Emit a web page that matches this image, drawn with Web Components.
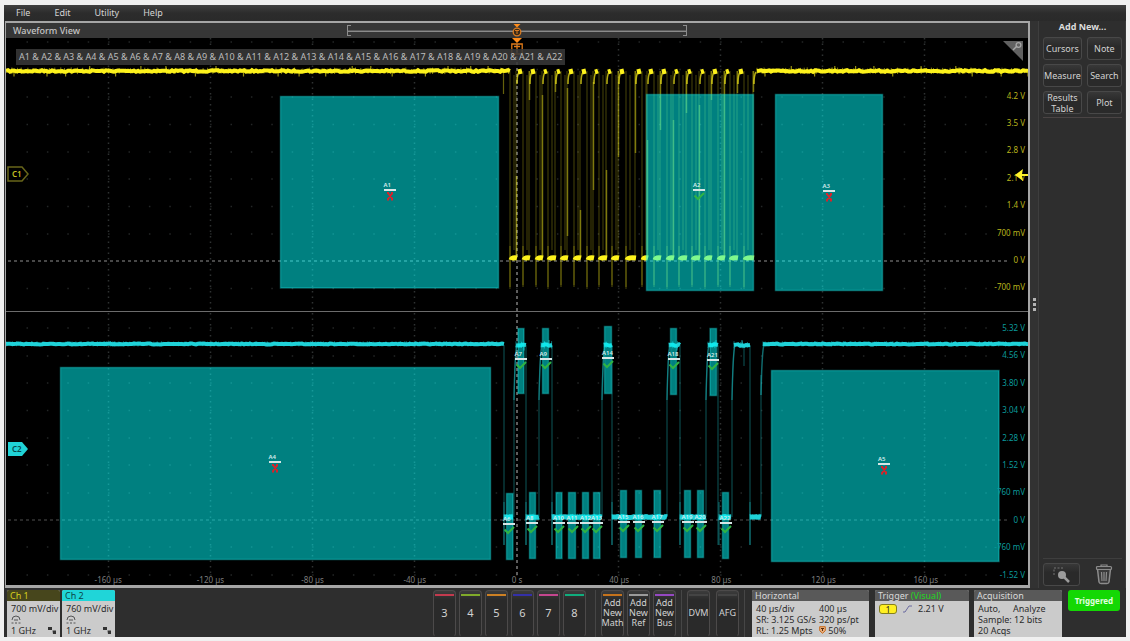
<!DOCTYPE html>
<html lang="en">
<head>
<meta charset="utf-8">
<meta name="viewport" content="width=device-width, initial-scale=1">
<title>Oscilloscope – Waveform View</title>
<style>
html, body { margin: 0; height: 100%; background: #f0f0f0; }
body { font-family: "Noto Sans", "Open Sans", sans-serif; font-size: 9px; line-height: 12px; color: #d2d2d2; }
</style>
</head>
<body>
<scope-app></scope-app>
<script>
const define = (name, html, setup) => {
  const template = document.createElement('template');
  template.innerHTML = html;
  customElements.define(name, class extends HTMLElement {
    constructor() {
      super();
      this.attachShadow({ mode: 'open' }).append(template.content.cloneNode(true));
    }
    connectedCallback() {
      if (setup && !this.ready) { this.ready = true; setup(this, this.shadowRoot); }
    }
  });
};

/* Menu bar */
define('scope-menu', `
<style>
:host { display: block; background: linear-gradient(#404040, #2c2c2c 50%, #2a2a2a); }
nav { display: flex; gap: 24px; padding: 1px 12px; }
button { all: unset; font: inherit; line-height: 14px; color: #d4d4d4; cursor: pointer; }
</style>
<nav><button>File</button><button>Edit</button><button>Utility</button><button>Help</button></nav>`);

/* Region marker: label, bar, pass or fail sign */
define('region-marker', `
<style>
:host { position: absolute; display: flex; flex-direction: column; align-items: center; width: 12px; transform: translate(-50%, -8px); }
span { font-size: 6px; line-height: 7px; font-weight: 600; color: #d4ecec; white-space: nowrap; align-self: flex-start; }
i { width: 12px; height: 2px; background: #d6e6e6; }
svg { width: 12px; height: 10px; display: block; }
path { fill: none; stroke-width: 2; }
.fail { stroke: #d8232a; } .pass { stroke: #2fb344; }
:host([state=pass]) .fail, :host([state=fail]) .pass { display: none; }
</style>
<span><slot></slot></span><i></i>
<svg viewBox="0 0 12 10"><path class="fail" d="M3 2h2M7 2h2M3 8.500h2M7 8.500h2M4 2l4.500 6M8.500 2l-4.500 6"/><path class="pass" d="M1.500 4.500l3.500 3.500 6-6"/></svg>`);

/* Vertical scale of one channel */
define('volt-axis', `
<style>
:host { position: absolute; right: 3px; display: flex; flex-direction: column; text-align: right; font-size: 8px; line-height: 12px; }
span { flex: 1; display: flex; align-items: center; justify-content: flex-end; white-space: nowrap; }
</style>`, (host, root) => {
  for (const text of host.getAttribute('values').split(',')) {
    const s = document.createElement('span');
    s.textContent = text;
    root.append(s);
  }
});

define('wave-plot', `
<style>
:host { display: block; position: relative; overflow: hidden; background: #000; flex: 1; min-height: 0; }
.traces { position: absolute; inset: 0; width: 100%; height: 100%; }
.trigger { position: absolute; left: 50%; top: 0; width: 12px; height: 17px; transform: translateX(-50%); }
.expr { position: absolute; left: 10px; top: 11px; padding: 1px 3px; background: rgba(56,56,56,.88); color: #bcbcbc; font-size: 9px; line-height: 14px; white-space: nowrap; }
.corner { position: absolute; right: 5px; top: 3px; width: 20px; height: 20px; }
.handle { position: absolute; left: 1px; width: 22px; height: 16px; transform: translateY(-50%); display: flex; align-items: center; font-size: 8px; font-weight: 600; }
.handle svg { position: absolute; inset: 0; }
.handle span { position: relative; padding-left: 5px; line-height: 12px; }
.level { position: absolute; right: 0; top: 25%; width: 13px; height: 12px; transform: translateY(-50%); }
.time { position: absolute; left: 5%; right: 5%; bottom: 0; display: grid; grid-template-columns: repeat(9, 1fr); text-align: center; font-size: 8px; line-height: 11px; color: #7e7e7e; }
</style>
<svg class="traces" viewBox="6 38 1022 547" preserveAspectRatio="none"></svg>
<volt-axis style="top:-2%;bottom:51.9%;color:#b9b41c" values=" , ,4.2 V,3.5 V,2.8 V,2.1 V,1.4 V,700 mV,0 V,-700 mV"></volt-axis>
<volt-axis style="top:50.5%;bottom:-.6%;color:#0b9a9c" values="5.32 V,4.56 V,3.80 V,3.04 V,2.28 V,1.52 V,760 mV,0 V,-760 mV,-1.52 V"></volt-axis>
<div class="time"><span>-160 µs</span><span>-120 µs</span><span>-80 µs</span><span>-40 µs</span><span>0 s</span><span>40 µs</span><span>80 µs</span><span>120 µs</span><span>160 µs</span></div>
<svg class="trigger" viewBox="0 0 12 17"><path d="M1 0h10L6 5z" fill="#ff8c1a"/><path d="M.8 6h10.400v10H.8zM3 8.500h6M6 8.500V14" fill="none" stroke="#e07a18" stroke-width="1.300"/></svg>
<div class="expr">A1 &amp; A2 &amp; A3 &amp; A4 &amp; A5 &amp; A6 &amp; A7 &amp; A8 &amp; A9 &amp; A10 &amp; A11 &amp; A12 &amp; A13 &amp; A14 &amp; A15 &amp; A16 &amp; A17 &amp; A18 &amp; A19 &amp; A20 &amp; A21 &amp; A22</div>
<svg class="corner" viewBox="0 0 20 20"><path d="M0 0h20v20z" fill="#616161"/><path d="M10 9l4-4" stroke="#a8a8a8" stroke-width="1.500"/><circle cx="15.500" cy="4" r="2.400" fill="none" stroke="#a8a8a8" stroke-width="1.300"/></svg>
<div class="handle" style="top:24.900%;color:#c4bf20"><svg viewBox="0 0 22 16"><path d="M1 1h14l6 7-6 7H1z" fill="#000" stroke="#68661a" stroke-width="1.500"/></svg><span>C1</span></div>
<div class="handle" style="top:75.100%;color:#07494c"><svg viewBox="0 0 22 16"><path d="M1 1h14l6 7-6 7H1z" fill="#20d3d6"/></svg><span>C2</span></div>
<svg class="level" viewBox="0 0 13 12"><path d="M0 6l8-6-1 5h6v2H7l1 5z" fill="#fff22a"/></svg>`, (host, root) => {
  const svg = root.querySelector('.traces');
  const out = [];
  let seed = 7;
  const rnd = () => (seed = (seed * 16807) % 2147483647) / 2147483647;
  const path = (d, stroke, w = 1, o = 1, extra = '') =>
    out.push(`<path d="${d}" fill="none" stroke="${stroke}" stroke-width="${w}" opacity="${o}" ${extra}/>`);

  /* graticule */
  for (let i = 0; i < 9; i++) if (i !== 4)
    path(`M${108.5 + i * 102} 38V575`, '#3b3f3f', 1.5, .8, 'stroke-dasharray="1.500 4"');
  for (const y of [42, 69.500, 97, 124.500, 152, 179, 206.500, 234, 288.500, 328, 356, 383, 410.500, 438, 465, 493, 547, 575])
    path(`M26.500 ${y}H1000`, '#2c3030', 1.500, .8, 'stroke-dasharray="1.500 18.900"');
  path('M8 261H1010', '#484848', 2, 1, 'stroke-dasharray="3 3"');
  path('M8 520H1010', '#363636', 1.500, 1, 'stroke-dasharray="3 3"');
  path('M6 311.500H1028', '#6c6c6c', 1);
  path('M517 38V575', '#7c7c7c', 1.500, 1, 'stroke-dasharray="3 3"');

  /* a noisy flat stretch */
  const flat = (x0, x1, y, color, thick, amp) => {
    let d = `M${x0} ${y}`, n = '';
    for (let x = x0 + 2; x < x1; x += 2) d += `L${x} ${(y + (rnd() - .5) * amp).toFixed(1)}`;
    for (let x = x0; x < x1; x += 1 + rnd() * 6) {
      const h = thick / 2 + rnd() * amp;
      n += `M${x.toFixed(1)} ${(y - h).toFixed(1)}V${(y + h * .9).toFixed(1)}`;
    }
    path(n, color, 1, .55);
    if (amp > 1) {
      n = '';
      for (let x = x0 + 8; x < x1; x += 14 + rnd() * 22) n += `M${x.toFixed(1)} ${y}v${rnd() > .5 ? 5.500 : -5}`;
      path(n, color, 1.200, .6);
    }
    path(d + `L${x1} ${y}`, color, thick);
  };

  /* channel 1 */
  const Y = '#fdf21c';
  flat(6, 510, 71, Y, 4, 1.600);
  flat(757, 1028, 71, Y, 4, 1.600);
  const lows = [[510,516],[523,529],[536,542],[548,555],[561,567],[574,580],[587,593],[599,606],[612,618],[626,635],[642,647],[654,660],[667,673],[679,686],[692,699],[705,711],[718,724],[730,737],[744,753]];
  const bright = [[176,258],[71,100],[95,258],[71,92],[88,236],[210,258],[82,190],[170,258],[71,157],[71,153],[140,258],[71,130],[120,258],[71,113],[105,258],[71,100],[71,258],[71,93],[71,92]];
  lows.forEach(([a, b], i) => {
    path(`M${a} 71V${i % 3 ? 285 : 289}M${b} 71V258M${a + 4} 75V250`, Y, 1.200, .24);
    path(`M${a} 246V287`, Y, 1.200, .3);
    path(`M${b + .5} ${bright[i][0]}V${bright[i][1]}`, Y, 1.500, .42);
    path(`M${b + 1} 84Q${b + 1} 75 ${b + 3} 72`, Y, 1.500, .7);
    path(`M${a + 1} 260Q${a + 2} 257 ${b + 1} 258`, Y, 5);
    if (i < 18) path(`M${b + 2} 72L${Math.min(b + 6, lows[i + 1][0] - 1)} 71`, Y, 5);
  });
  path('M503.500 71V94', Y, 1.200, .4);

  /* channel 2 */
  const C = '#1fd2d8';
  flat(6, 504, 344, C, 4, .8);
  flat(763, 1028, 344, C, 4, .8);
  for (const [a, b] of [[515,526],[540,552],[603,612],[668,680],[707,718],[733,750]]) {
    flat(a + 1, b, 345, C, 4, 2);
    path(`M${a - 1} 517V400Q${a} 350 ${a + 2} 345M${b} 345V545`, C, 1.200, .34);
    path(`M${a - 1} 400Q${a} 352 ${a + 2} 345`, C, 1.500, .4);
  }
  path('M744 345V366M761 517V375M504 345V545', C, 1.200, .34);
  path('M761 395Q762 350 764 345', C, 1.500, .5);
  for (const [a, b] of [[504,513],[526,539],[552,602],[612,667],[680,706],[719,731],[750,761]]) {
    flat(a, b, 517, C, 5, .8);
    path(`M${a} 502V545`, C, 1.200, .4);
  }

  /* visual trigger regions: x0, x1, y0, y1, marker x, marker y, state */
  const regions = [
    [280,499,96,288.500,389.500,190,'fail'],[646,754,94,291,699,190,'pass'],[775,883,94,291,828.500,190.500,'fail'],
    [60,491,367,560,274.500,462,'fail'],[771,999.500,370,562,884,463.500,'fail'],[506,513.500,493,560,509,524,'pass'],
    [517.500,524.500,328,394,520.500,359,'pass'],[529,536,492,559,532,523,'pass'],[542,549,328,394,545.500,359,'pass'],
    [555.500,562.500,492,559,559,523,'pass'],[568,576,492,559,572.500,523,'pass'],[582,589,492,559,586,523,'pass'],
    [593,600.500,492,559,597,523,'pass'],[604,612,326,394,608,357.500,'pass'],[620,627,490,558,623.500,522,'pass'],
    [635,642,490,558,638.500,522,'pass'],[653.500,661,490,558,657.500,522,'pass'],[670,677,328,395,673.500,359,'pass'],
    [684,691,490,558,687.500,522,'pass'],[697,704,490,558,700.500,522,'pass'],[709.500,717,328,396,713,360,'pass'],
    [722,729,492,559,725.500,523,'pass']];
  regions.forEach(([x0, x1, y0, y1, mx, my, state], i) => {
    out.push(`<rect x="${x0 + .5}" y="${y0 + .5}" width="${x1 - x0 - 1}" height="${y1 - y0 - 1}" fill="#00ffff" fill-opacity=".5" stroke="#20e8e8" stroke-opacity=".35" stroke-width="1.500"/>`);
    const m = document.createElement('region-marker');
    m.textContent = 'A' + (i + 1);
    m.setAttribute('state', state);
    m.style.left = (mx - 6) / 10.22 + '%';
    m.style.top = (my - 38) / 5.47 + '%';
    svg.after(m);
  });
  svg.innerHTML = out.join('');
});

define('wave-view', `
<style>
:host { display: flex; flex-direction: column; flex: 1; min-width: 0; box-sizing: border-box; border: 2px solid #a6a6a6; border-width: 2px 2px 3px 1px; background: #000; }
header { display: grid; grid-template-columns: 1fr 33.200% 1fr; align-items: center; height: 15px; background: #363636; }
h1 { margin: 0; padding-left: 7px; font-size: 9px; line-height: 14px; font-weight: 500; color: #c6c6c6; }
.record { position: relative; height: 11px; border: solid #8c8c8c; border-width: 0 1px; display: flex; align-items: center; }
.record::before { content: ""; flex: 1; height: 1px; background: #8a8a8a; border-top: 1px solid #5c5c5c; }
.record::after { content: ""; position: absolute; inset: 0; background: linear-gradient(#8c8c8c, #8c8c8c) 0 0 / 3px 1px, linear-gradient(#8c8c8c, #8c8c8c) 0 100% / 3px 1px, linear-gradient(#8c8c8c, #8c8c8c) 100% 0 / 3px 1px, linear-gradient(#8c8c8c, #8c8c8c) 100% 100% / 3px 1px; background-repeat: no-repeat; }
svg { position: absolute; left: 50%; top: -1px; width: 10px; height: 13px; transform: translateX(-50%); }
</style>
<header><h1>Waveform View</h1><div class="record"><svg viewBox="0 0 10 13"><path d="M1.500 0h7L5 3.500z" fill="#ff8c1a"/><circle cx="5" cy="8" r="3.800" fill="#3a2a18" stroke="#d87a20" stroke-width="1.300"/><path d="M3 6.500h4M5 6.500V10" stroke="#d87a20"/></svg></div></header>
<wave-plot></wave-plot>`);

define('side-panel', `
<style>
:host { display: flex; width: 96px; background: #3a3a3a; }
.grip { width: 8px; display: flex; flex-direction: column; align-items: center; justify-content: center; gap: 2px; background: #323232; }
.grip i { width: 3px; height: 3px; background: #b4b4b4; }
aside { flex: 1; display: flex; flex-direction: column; margin-right: 1px; background: #2e2e2e; border-left: 1px solid #3e3e3e; padding: 0 3px 2px 4px; }
h2 { margin: 0; font-size: 9px; line-height: 12px; padding: 0 0 4px; text-align: center; color: #dcdcdc; }
.grid { display: grid; grid-template-columns: 1fr 1fr; gap: 4px 5px; padding-bottom: 3px; border-bottom: 1px solid #4a4444; }
button { font: inherit; font-size: 9px; line-height: 11px; color: #d2d2d2; background: linear-gradient(#383838, #2a2a2a 40%); border: 1px solid #484848; border-radius: 3px; height: 23px; padding: 0; display: flex; align-items: center; justify-content: center; overflow: visible; }
.foot { margin-top: auto; border-top: 1px solid #3e3e3e; padding-top: 4px; display: grid; grid-template-columns: 1fr 1fr; gap: 5px; }
.bare { border-color: transparent; background: none; }
</style>
<div class="grip"><i></i><i></i><i></i></div>
<aside>
<h2>Add New...</h2>
<div class="grid"><button>Cursors</button><button>Note</button><button>Measure</button><button>Search</button><button>Results<br>Table</button><button>Plot</button></div>
<div class="foot"><button aria-label="Zoom"><svg width="18" height="16" viewBox="0 0 18 16"><path d="M1 8V1h10" fill="none" stroke="#747474" stroke-dasharray="2 1.500"/><circle cx="9" cy="8" r="4" fill="#9c9c9c"/><path d="M11.500 10.500l4.500 4.500" stroke="#9c9c9c" stroke-width="2.500"/></svg></button>
<button class="bare" aria-label="Delete"><svg width="18" height="21" viewBox="0 0 18 21"><path d="M2.500 5l1.500 13q.2 1.500 2 1.500h6q1.800 0 2-1.500L15.500 5" fill="#3a3a3a" stroke="#8c8c8c" stroke-width="1.500"/><rect x="1.500" y="2.500" width="15" height="3" rx="1" fill="#3a3a3a" stroke="#8c8c8c" stroke-width="1.200"/><path d="M6 2.500V1h6v1.500M6.500 8l.5 9M9 8v9M11.500 8l-.5 9" fill="none" stroke="#8c8c8c" stroke-width="1.200"/></svg></button></div>
</aside>`);

/* Settings badge: header and light body */
define('info-badge', `
<style>
:host { display: flex; flex-direction: column; box-sizing: border-box; border-radius: 2px 2px 0 0; background: #cbcbcb; color: #2c2c2c; font-size: 9px; line-height: 11px; }
.head { background: var(--head, #595959); color: var(--ink, #dadada); padding: 0 3px; line-height: 11px; font-size: 9px; white-space: nowrap; border-radius: 2px 2px 0 0; }
.body { padding: 2px 4px 0; white-space: nowrap; }
</style>
<div class="head"><slot name="head"></slot></div><div class="body"><slot></slot></div>`);

/* Button for an inactive source, with its colour strip */
define('add-button', `
<style>
:host { display: block; width: 23px; }
button { font: inherit; line-height: 10px; width: 100%; height: 100%; display: flex; flex-direction: column; align-items: center; box-sizing: border-box; padding: 3px 0 0; color: #d2d2d2; background: linear-gradient(#3c3c3c, #2a2a2a 20%); border: 1px solid #4c4a4a; border-bottom-color: #2c2c2c; border-radius: 4px; }
i { flex: none; width: 19px; height: 2px; background: var(--strip, #444); }
span { flex: 1; display: flex; align-items: center; justify-content: center; white-space: pre; text-align: center; padding-bottom: 6px; font-size: var(--size, 9px); }
</style>
<button><i></i><span><slot></slot></span></button>`);

define('bottom-bar', `
<style>
:host { display: flex; height: 47px; padding: 2px 6px 0 3px; background: #2e2e2e; }
.row { display: flex; }
.auto { margin-left: auto; }
.sources { gap: 3px; padding-right: 4px; --size: 11px; }
.sep { width: 1px; margin: 0 5px; background: #464646; }
.ch { width: 53px; margin-right: 2px; }
.ch svg { display: block; }
.line { display: flex; justify-content: space-between; align-items: center; }
.two { display: grid; grid-template-columns: 63px auto; }
.horizontal { width: 117px; margin: 0 6px 0 2px; }
.trigger { width: 94px; margin-right: 5px; }
.acq { width: 88px; margin-right: 6px; }
.green { color: #22d822; }
.src { background: #fff022; border: 1px solid #85801a; border-radius: 3px; width: 16px; height: 8px; line-height: 9px; text-align: center; }
.trig { gap: 6px; justify-content: flex-start; }
.run { font: inherit; font-weight: 700; font-size: 8px; color: #e4ffe0; background: #14d804; border: 0; border-radius: 3px; width: 52px; height: 21px; padding: 0; }
</style>
<div class="row">
<info-badge class="ch" style="--head:#47461c;--ink:#d6d01e"><span slot="head">Ch 1</span>700 mV/div<svg width="10" height="11" viewBox="0 0 10 11"><path d="M1 6q0-4 4-4t4 4M.5 9h2M4 9h2M7.500 9h2M3 6h4" fill="none" stroke="#555"/></svg><div class="line">1 GHz<svg width="8" height="7" viewBox="0 0 8 7"><path d="M0 0h4v3H0zM4.500 3.500H8V7H5z" fill="#333"/></svg></div></info-badge>
<info-badge class="ch" style="--head:#20d5d8;--ink:#0b4548"><span slot="head">Ch 2</span>760 mV/div<svg width="10" height="11" viewBox="0 0 10 11"><path d="M1 6q0-4 4-4t4 4M.5 9h2M4 9h2M7.500 9h2M3 6h4" fill="none" stroke="#555"/></svg><div class="line">1 GHz<svg width="8" height="7" viewBox="0 0 8 7"><path d="M0 0h4v3H0zM4.500 3.500H8V7H5z" fill="#333"/></svg></div></info-badge>
</div>
<div class="row auto sources">
<add-button style="--strip:#c23a4e">3</add-button><add-button style="--strip:#80aa2a">4</add-button><add-button style="--strip:#cc8024">5</add-button><add-button style="--strip:#3430a8">6</add-button><add-button style="--strip:#c4468e">7</add-button><add-button style="--strip:#10ac7c">8</add-button>
</div>
<div class="sep"></div>
<div class="row" style="gap:3px"><add-button style="--strip:#c4721c">Add
New
Math</add-button><add-button style="--strip:#9a9a9a">Add
New
Ref</add-button><add-button style="--strip:#9448c0">Add
New
Bus</add-button></div>
<div class="sep"></div>
<div class="row" style="gap:6px"><add-button>DVM</add-button><add-button>AFG</add-button></div>
<div class="sep"></div>
<info-badge class="horizontal"><span slot="head">Horizontal</span><div class="two"><span>40 µs/div</span><span>400 µs</span><span>SR: 3.125 GS/s</span><span>320 ps/pt</span><span>RL: 1.25 Mpts</span><span><svg width="7" height="8" viewBox="0 0 7 8"><path d="M.7.7h5.600v4L3.500 7.300.7 4.700z" fill="#e8b080" stroke="#c86a1c"/><path d="M2 2.500h3M3.500 2.500V5" stroke="#5c2c08"/></svg> 50%</span></div></info-badge>
<info-badge class="trigger"><span slot="head">Trigger <span class="green">(Visual)</span></span><div class="line trig"><span class="src">1</span><svg width="9" height="8" viewBox="0 0 9 8"><path d="M0 7h2l4-6h3" fill="none" stroke="#6a6aa0"/></svg><span>2.21 V</span></div></info-badge>
<info-badge class="acq"><span slot="head">Acquisition</span><div style="display:grid;grid-template-columns:35px auto"><span>Auto,</span><span>Analyze</span></div>Sample: 12 bits<br>20 Acqs</info-badge>
<button class="run">Triggered</button>`);

define('scope-app', `
<style>
:host { display: flex; flex-direction: column; box-sizing: border-box; height: 100vh; min-height: 400px; padding: 5px 4px 4px; }
.main { flex: 1; display: flex; min-height: 0; background: #2e2e2e; padding-left: 1px; }
</style>
<scope-menu></scope-menu>
<div class="main"><wave-view></wave-view><side-panel></side-panel></div>
<bottom-bar></bottom-bar>`);
</script>
</body>
</html>
